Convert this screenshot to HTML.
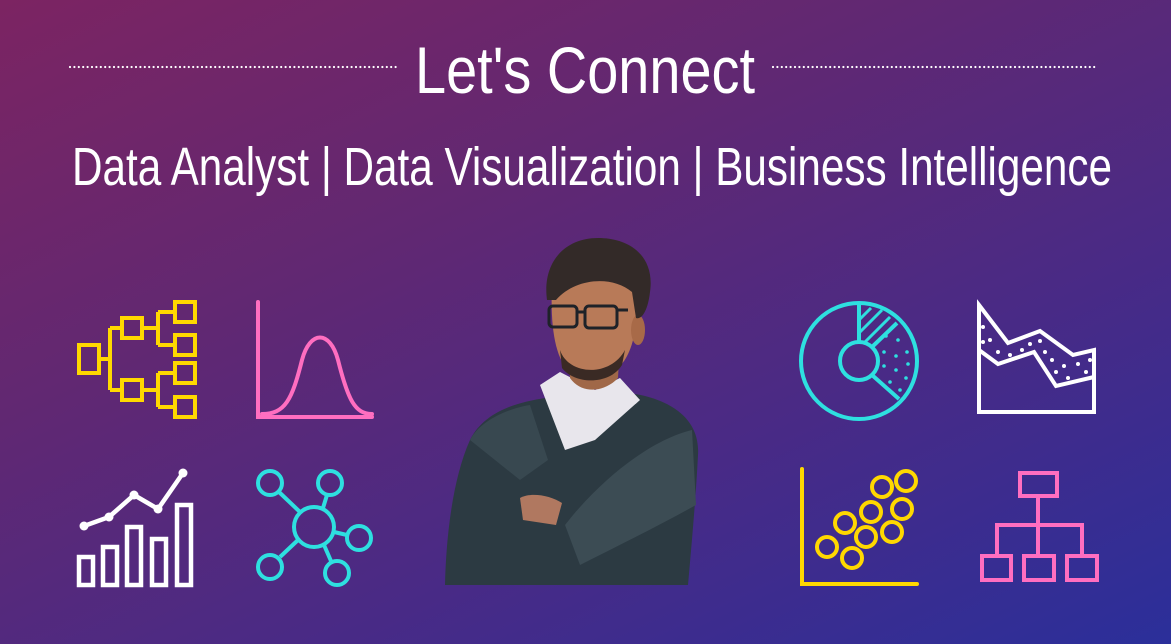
<!DOCTYPE html>
<html><head><meta charset="utf-8"><style>
html,body{margin:0;padding:0;width:1171px;height:644px;overflow:hidden}
body{background:linear-gradient(155deg,#7c2462 0%,#612872 35%,#4a2a85 65%,#2b2f9a 100%)}
svg{position:absolute;left:0;top:0}
</style></head><body>
<svg width="1171" height="644" viewBox="0 0 1171 644" xmlns="http://www.w3.org/2000/svg">
<g fill="#fff" font-family="Liberation Sans, sans-serif">
<text x="415" y="93" font-size="66" textLength="340" lengthAdjust="spacingAndGlyphs">Let's Connect</text>
<text x="72" y="185" font-size="54" textLength="1040" lengthAdjust="spacingAndGlyphs">Data Analyst | Data Visualization | Business Intelligence</text>
</g>
<g stroke="#fff" stroke-width="2.2" stroke-linecap="round" stroke-dasharray="0 4.4">
<line x1="70" y1="67" x2="398" y2="67"/><line x1="773" y1="67" x2="1097" y2="67"/>
</g>
<g fill="none" stroke="#ffd800" stroke-width="4">
<rect x="79" y="345" width="20" height="28"/>
<rect x="122" y="318" width="20" height="20"/><rect x="122" y="380" width="20" height="20"/>
<rect x="175" y="302" width="20" height="20"/><rect x="175" y="335" width="20" height="20"/>
<rect x="175" y="363" width="20" height="20"/><rect x="175" y="397" width="20" height="20"/>
<path d="M99 359H110M110 328V390M110 328H122M110 390H122M142 328H158M158 312V345M158 312H175M158 345H175M142 390H158M158 373V407M158 373H175M158 407H175"/>
</g>
<g fill="none" stroke="#ff6ec0" stroke-width="4" stroke-linecap="round">
<path d="M258 302V417H372"/>
<path d="M262 414C285 414 292 400 302 360C310 330 330 330 338 360C348 400 355 414 372 414"/>
</g>
<g fill="none" stroke="#fff" stroke-width="4.5">
<rect x="79" y="557" width="14" height="28"/><rect x="103" y="547" width="14" height="38"/>
<rect x="127" y="527" width="14" height="58"/><rect x="152" y="539" width="14" height="46"/>
<rect x="177" y="505" width="14" height="80"/>
<path d="M84 526L109 517L134 495L158 509L183 473" stroke-linejoin="round"/>
</g>
<g fill="#fff"><circle cx="84" cy="526" r="4.5"/><circle cx="109" cy="517" r="4.5"/><circle cx="134" cy="495" r="4.5"/><circle cx="158" cy="509" r="4.5"/><circle cx="183" cy="473" r="4.5"/></g>
<g fill="none" stroke="#2ee0e0" stroke-width="4">
<circle cx="314" cy="527" r="20"/>
<circle cx="270" cy="483" r="12"/><circle cx="330" cy="483" r="12"/><circle cx="359" cy="538" r="12"/><circle cx="337" cy="573" r="12"/><circle cx="270" cy="567" r="12"/>
<path d="M279 492L300 512M327 495L323 508M334 532L347 535M324 545L331 561M298 540L280 557"/>
</g>
<g fill="none" stroke="#2ee0e0" stroke-width="4">
<circle cx="859" cy="361" r="58"/><circle cx="859" cy="361" r="19"/>
<path d="M859 304V342M872 347L897 323M872 375L899 399"/>
<path d="M859 320L871 308M859 333L882 310M865 342L890 317" stroke-width="3"/>
</g>
<g fill="#2ee0e0">
<circle cx="886" cy="336" r="1.8"/><circle cx="898" cy="340" r="1.8"/><circle cx="907" cy="352" r="1.8"/>
<circle cx="884" cy="352" r="1.8"/><circle cx="896" cy="356" r="1.8"/><circle cx="908" cy="364" r="1.8"/>
<circle cx="884" cy="366" r="1.8"/><circle cx="896" cy="370" r="1.8"/><circle cx="906" cy="378" r="1.8"/>
<circle cx="890" cy="382" r="1.8"/><circle cx="900" cy="390" r="1.8"/>
</g>
<g fill="none" stroke="#fff" stroke-width="4">
<path d="M979 305L1008 343L1040 331L1073 355L1094 350V412H979Z"/>
<path d="M979 350L998 364L1034 352L1056 386L1094 377"/>
</g>
<g fill="#fff">
<circle cx="983" cy="327" r="2"/><circle cx="990" cy="340" r="2"/><circle cx="998" cy="352" r="2"/><circle cx="983" cy="342" r="2"/>
<circle cx="1010" cy="355" r="2"/><circle cx="1022" cy="350" r="2"/><circle cx="1030" cy="344" r="2"/><circle cx="1040" cy="341" r="2"/>
<circle cx="1045" cy="352" r="2"/><circle cx="1052" cy="360" r="2"/><circle cx="1056" cy="372" r="2"/><circle cx="1064" cy="366" r="2"/>
<circle cx="1068" cy="378" r="2"/><circle cx="1078" cy="364" r="2"/><circle cx="1086" cy="372" r="2"/><circle cx="1090" cy="360" r="2"/>
</g>
<g fill="none" stroke="#ffd800" stroke-width="4">
<path d="M802 469V584H917" stroke-linecap="round"/>
<circle cx="906" cy="481" r="10"/><circle cx="882" cy="487" r="10"/><circle cx="902" cy="509" r="10"/><circle cx="871" cy="512" r="10"/>
<circle cx="845" cy="523" r="10"/><circle cx="892" cy="532" r="10"/><circle cx="866" cy="537" r="10"/><circle cx="827" cy="547" r="10"/><circle cx="852" cy="558" r="10"/>
</g>
<g fill="none" stroke="#ff6ec0" stroke-width="4">
<rect x="1020" y="473" width="37" height="23"/>
<rect x="982" y="556" width="29" height="24"/><rect x="1024" y="556" width="30" height="24"/><rect x="1067" y="556" width="30" height="24"/>
<path d="M1038 496V556M997 556V525H1082V556"/>
</g>
<g>
<path d="M445 585C446 540 452 480 470 440C485 410 520 402 545 398C570 392 610 388 645 396C680 405 700 425 698 455C696 495 692 540 688 585Z" fill="#2c3a42"/>
<path d="M470 440C480 420 510 408 530 405L548 460L520 480Z" fill="#384850"/>
<path d="M565 525C600 480 650 440 692 430L696 505C660 525 620 545 580 565Z" fill="#3c4c54"/>
<path d="M540 385L560 372L595 390L620 378L640 400L595 440L565 450Z" fill="#e8e6ec"/>
<path d="M520 498C530 492 550 495 562 503L556 525L523 520Z" fill="#b07860"/>
<path d="M568 340L570 378C582 395 605 392 618 378L620 340Z" fill="#a06848"/>
<path d="M552 285C550 330 556 360 570 372C580 380 602 380 618 368C632 355 638 330 638 290C630 275 570 272 552 285Z" fill="#b87a58"/>
<ellipse cx="638" cy="330" rx="7" ry="15" fill="#a86a48"/>
<path d="M560 350C568 375 610 378 625 350L622 365C610 385 575 385 562 368Z" fill="#3a2a24"/>
<path d="M547 300C542 262 565 238 598 238C632 238 655 258 650 292C648 310 642 320 636 318L632 292C612 275 575 278 556 300Z" fill="#332a28"/>
<g fill="none" stroke="#1e2228" stroke-width="3"><rect x="549" y="306" width="28" height="21" rx="4"/><rect x="585" y="306" width="32" height="22" rx="4"/><path d="M577 312H585M617 310H628"/></g>
</g>
</svg>
</body></html>
